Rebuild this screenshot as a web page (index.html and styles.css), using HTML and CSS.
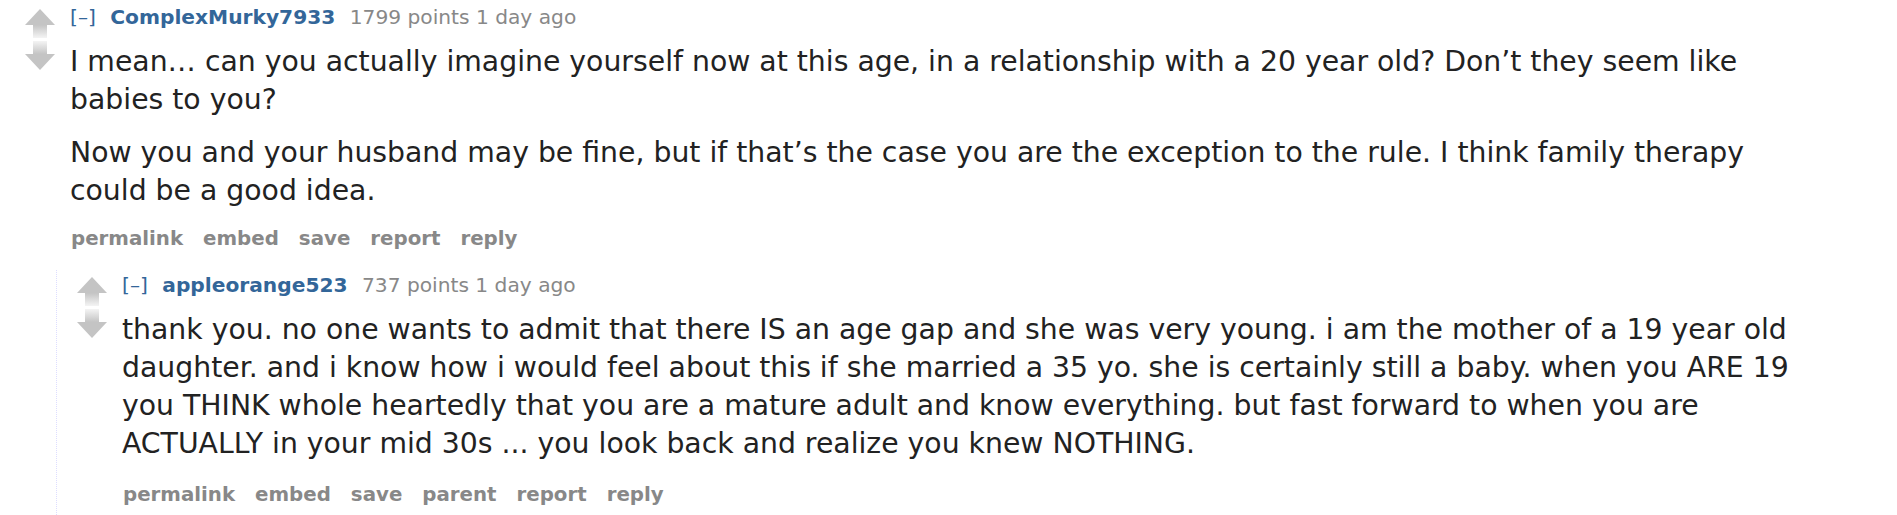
FILE: index.html
```html
<!DOCTYPE html>
<html lang="en">
<head>
  <meta charset="UTF-8">
  <title>comments</title>
  <link rel="stylesheet" href="styles.css">
</head>
<body>

  <svg class="defs" width="0" height="0">
    <defs>
      <linearGradient id="stemUp" x1="0" y1="0" x2="0" y2="1">
        <stop offset="0" stop-color="#c4c4c4"/>
        <stop offset="1" stop-color="#f4f4f4"/>
      </linearGradient>
      <linearGradient id="stemDown" x1="0" y1="0" x2="0" y2="1">
        <stop offset="0" stop-color="#f4f4f4"/>
        <stop offset="1" stop-color="#c4c4c4"/>
      </linearGradient>
      <symbol id="arrowUp" viewBox="0 0 30 29">
        <polygon points="15,0 30,16 0,16" fill="#c4c4c4"/>
        <rect x="8" y="16" width="14" height="13" fill="url(#stemUp)"/>
      </symbol>
      <symbol id="arrowDown" viewBox="0 0 30 29">
        <rect x="8" y="0" width="14" height="13" fill="url(#stemDown)"/>
        <polygon points="0,13 30,13 15,29" fill="#c4c4c4"/>
      </symbol>
    </defs>
  </svg>

  <div class="commentarea">

    <div class="comment">
      <div class="thing">
        <div class="midcol">
          <svg class="arrow" width="30" height="29"><use href="#arrowUp"/></svg>
          <svg class="arrow" width="30" height="29"><use href="#arrowDown"/></svg>
        </div>
        <div class="entry">
          <p class="tagline">
            <a class="expand">[–]</a>
            <a class="author">ComplexMurky7933</a>
            <span class="score">1799 points</span> <time>1 day ago</time>
          </p>
          <div class="md">
            <p>I mean… can you actually imagine yourself now at this age, in a relationship with a 20 year old? Don’t they seem like babies to you?</p>
            <p>Now you and your husband may be fine, but if that’s the case you are the exception to the rule. I think family therapy could be a good idea.</p>
          </div>
          <ul class="buttons">
            <li>permalink</li>
            <li>embed</li>
            <li>save</li>
            <li>report</li>
            <li>reply</li>
          </ul>
        </div>
      </div>

      <div class="child">
        <div class="comment">
          <div class="thing">
            <div class="midcol">
              <svg class="arrow" width="30" height="29"><use href="#arrowUp"/></svg>
              <svg class="arrow" width="30" height="29"><use href="#arrowDown"/></svg>
            </div>
            <div class="entry">
              <p class="tagline">
                <a class="expand">[–]</a>
                <a class="author">appleorange523</a>
                <span class="score">737 points</span> <time>1 day ago</time>
              </p>
              <div class="md">
                <p>thank you. no one wants to admit that there IS an age gap and she was very young. i am the mother of a 19 year old daughter. and i know how i would feel about this if she married a 35 yo. she is certainly still a baby. when you ARE 19 you THINK whole heartedly that you are a mature adult and know everything. but fast forward to when you are ACTUALLY in your mid 30s ... you look back and realize you knew NOTHING.</p>
              </div>
              <ul class="buttons">
                <li>permalink</li>
                <li>embed</li>
                <li>save</li>
                <li>parent</li>
                <li>report</li>
                <li>reply</li>
              </ul>
            </div>
          </div>
        </div>
      </div>
    </div>

  </div>

</body>
</html>
```

FILE: styles.css
```css
body {
  margin: 0;
  background: #fff;
  font-family: "DejaVu Sans", Verdana, sans-serif;
  color: #222;
}

.defs {
  display: block;
  width: 0;
  height: 0;
  overflow: hidden;
}

.commentarea {
  padding: 5px 0 0 25px;
}

.thing {
  display: flex;
}

.midcol {
  width: 45px;
  flex: none;
  display: flex;
  flex-direction: column;
  gap: 3px;
  padding-top: 4px;
}

.arrow {
  display: block;
}

.entry {
  flex: 1;
  min-width: 0;
}

.tagline {
  margin: 0;
  font-size: 20.2px;
  line-height: 24px;
  color: #888;
}

.tagline a {
  color: #369;
  text-decoration: none;
}

.tagline .expand {
  margin-right: 8px;
}

.tagline .author {
  font-weight: bold;
  margin-right: 8px;
}

.md {
  max-width: 1700px;
  margin-top: 14px;
  font-size: 28.3px;
  line-height: 38px;
}

.md p {
  margin: 0 0 15px;
}

.md p:last-child {
  margin-bottom: 0;
}

.buttons {
  list-style: none;
  margin: 17px 0 0;
  padding: 0 0 0 1px;
  display: flex;
  gap: 20px;
  font-size: 19.8px;
  line-height: 24px;
  font-weight: bold;
  color: #888;
}

.child {
  margin: 19px 0 0 31px;
  border-left: 1px dotted #ddf;
  padding: 3px 0 30px 20px;
}

.child .buttons {
  margin-top: 20px;
}
```
